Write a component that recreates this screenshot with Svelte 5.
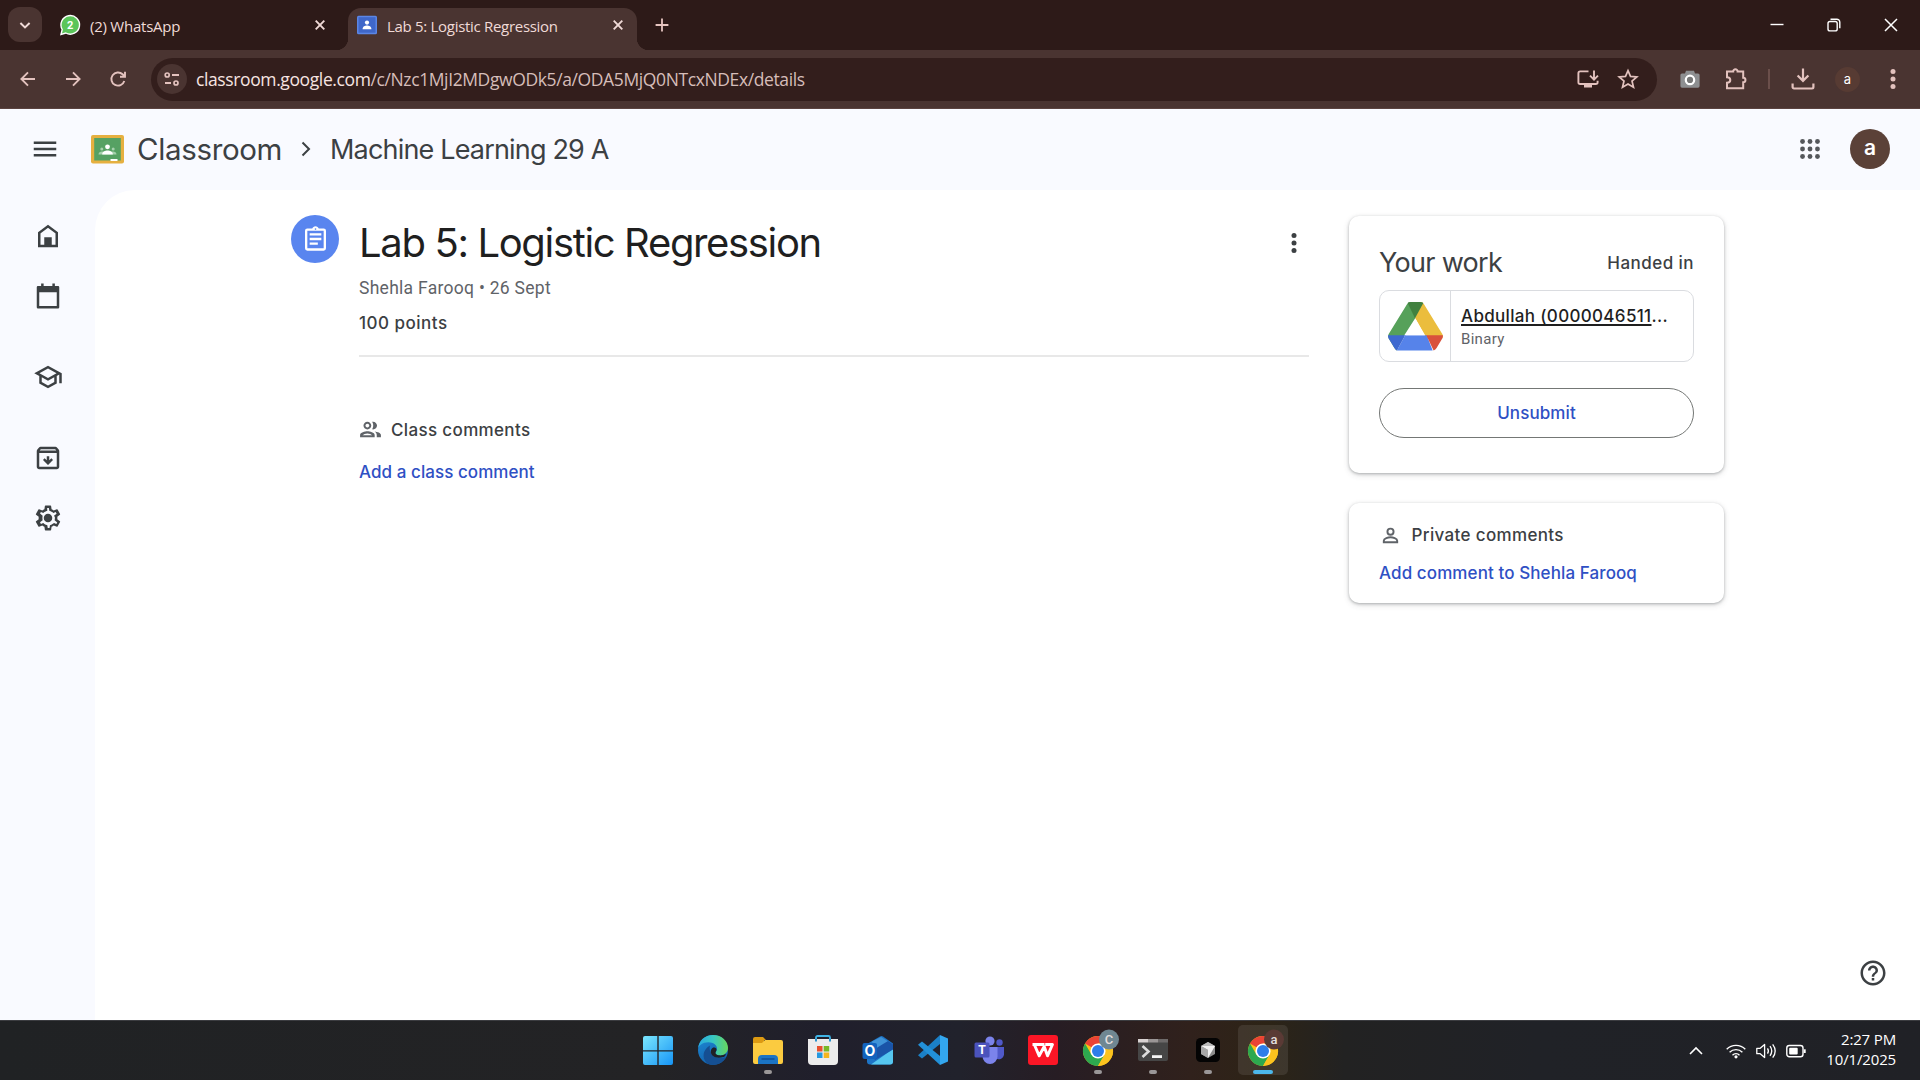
<script>
  const sideIcons = [
    { name: 'home', gap: 0 },
    { name: 'calendar', gap: 30 },
    { name: 'enrolled', gap: 51 },
    { name: 'archive', gap: 51 },
    { name: 'settings', gap: 30 }
  ];
  const apps = ['start', 'edge', 'files', 'store', 'outlook', 'code', 'teams', 'wps', 'chrome', 'terminal', 'cursor', 'chrome-active'];
  const running = ['files', 'chrome', 'terminal', 'cursor'];
  const dots = [4, 12, 20];
</script>

{#snippet kebab()}
  <svg class="i30" viewBox="0 0 24 24"><circle cx="12" cy="6" r="2" /><circle cx="12" cy="12" r="2" /><circle cx="12" cy="18" r="2" /></svg>
{/snippet}

{#snippet cross()}
  <svg class="i20 line" viewBox="0 0 20 20"><path d="M5.7 5.7l8.6 8.6M14.3 5.7l-8.6 8.6" stroke-width="1.9" /></svg>
{/snippet}

{#snippet chromeLogo(letter, tone)}
  <svg class="task" viewBox="0 0 40 40">
    <circle cx="20" cy="21" r="15" fill="#fbc116" />
    <path d="M20 21L7 13.5A15 15 0 0 1 33 13.5H20z" fill="#ea4335" />
    <path d="M7 13.5A15 15 0 0 0 20 36L26.5 24.8 20 21 13.5 24.8z" fill="#2da94f" />
    <path d="M20 13.5H33A15 15 0 0 1 20 36L26.5 24.8z" fill="#fcc31e" />
    <circle cx="20" cy="21" r="7.6" fill="#fff" />
    <circle cx="20" cy="21" r="6" fill="#2e7de9" />
    <circle cx="31" cy="9.5" r="10" fill={tone} />
    <text x="31" y="14" text-anchor="middle" class="badge">{letter}</text>
  </svg>
{/snippet}

<div class="screen">
  <header class="tabs">
    <div class="tab-search">
      <svg class="i20 line" viewBox="0 0 20 20"><path d="M5.4 8l4.6 4.4L14.6 8" stroke-width="2" /></svg>
    </div>
    <div class="tab idle">
      <svg class="i20" viewBox="0 0 20 20">
        <path d="M1 19.4l1.2-4.9A9.3 9.3 0 1 1 5.8 18z" fill="#5bc55a" stroke="#fff" stroke-width="1.4" />
        <text x="10.2" y="14" text-anchor="middle" class="wa">2</text>
      </svg>
      <span class="t-wa">(2) WhatsApp</span>
      {@render cross()}
    </div>
    <div class="tab active">
      <svg class="i20" viewBox="0 0 20 20">
        <rect width="20" height="18.5" y=".7" rx="1.5" fill="#5b86e5" /><rect x="1.5" y="2.2" width="17" height="15.5" fill="#3f67c9" />
        <circle cx="10" cy="7.6" r="2.1" fill="#fff" /><path d="M5.6 14.2c0-2.800 2.400-3.700 4.400-3.700s4.400.9 4.400 3.700z" fill="#fff" />
      </svg>
      <span class="t-lab">Lab 5: Logistic Regression</span>
      {@render cross()}
    </div>
    <svg class="plus line" viewBox="0 0 20 20"><path d="M10 3.6v12.8M3.600 10h12.800" stroke-width="1.8" /></svg>
    <div class="window">
      <svg class="i20 line" viewBox="0 0 20 20"><path d="M3.5 9.500h13" stroke-width="1.4" /></svg>
      <svg class="i20 line" viewBox="0 0 20 20"><rect x="4" y="6.5" width="9.2" height="9.4" rx="2" stroke-width="1.4" /><path d="M6.5 4.2h6.3a3 3 0 0 1 3 3v6" stroke-width="1.4" /></svg>
      <svg class="i20 line" viewBox="0 0 20 20"><path d="M4 4l12 12M16 4L4 16" stroke-width="1.5" /></svg>
    </div>
  </header>

  <div class="toolbar">
    <nav class="nav">
      <svg class="i20 line" viewBox="0 0 20 20"><path d="M17 10H3.6M10 3.4L3.4 10l6.6 6.6" stroke-width="1.9" /></svg>
      <svg class="i20 line" viewBox="0 0 20 20"><path d="M3 10h13.4M10 3.4l6.6 6.6-6.6 6.6" stroke-width="1.9" /></svg>
      <svg class="i20 line" viewBox="0 0 20 20"><path d="M16.3 12a6.6 6.6 0 1 1-1.7-6.7L17 7.6M17 2.8v5h-5" stroke-width="1.9" /></svg>
    </nav>
    <div class="omnibox">
      <div class="site">
        <svg class="i20 line" viewBox="0 0 20 20"><circle cx="5.2" cy="6" r="2" stroke-width="1.7" /><path d="M10 6h7M3 14h6" stroke-width="1.8" /><circle cx="14" cy="14" r="2" stroke-width="1.7" /></svg>
      </div>
      <p class="url"><b>classroom.google.com</b>/c/Nzc1MjI2MDgwODk5/a/ODA5MjQ0NTcxNDEx/details</p>
      <svg class="i24 line" viewBox="0 0 24 24"><path d="M12.5 4.4H4.2a1.8 1.8 0 0 0-1.8 1.8v9a1.8 1.8 0 0 0 1.8 1.8h15.6a1.8 1.8 0 0 0 1.8-1.8v-1.4M18 3.5v8.6M14 8.6l4 4 4-4" stroke-width="1.9" /><path d="M8 17h8v3.500H8z" class="solid" /></svg>
      <svg class="i24 line" viewBox="0 0 24 24"><path d="M12 3.6l2.5 5.8 6.3.5-4.8 4.1 1.5 6.2-5.5-3.3-5.5 3.3L8 14 3.2 9.9l6.3-.5z" stroke-width="1.7" /></svg>
    </div>
    <div class="ext">
      <svg class="i24" viewBox="0 0 24 24"><path d="M4 6.5h3l1-2.8h8l1 2.8h3a1.6 1.6 0 0 1 1.6 1.6v11a1.6 1.6 0 0 1-1.6 1.6H4a1.6 1.6 0 0 1-1.6-1.6v-11A1.6 1.6 0 0 1 4 6.5z" fill="#8e8f91" /><circle cx="12" cy="12.900" r="4.200" fill="#777" stroke="#fff" stroke-width="2.200" /></svg>
      <svg class="i24 line" viewBox="0 0 24 24"><path d="M3 4.6h6.200c-.2-3 4.600-3 4.400 0h5.600v6.200c3 0 3 4.400 0 4.400v6H3v-5.400c4.400 0 4.400-5.600 0-5.600z" stroke-width="2" /></svg>
      <i class="bar"></i>
      <svg class="i24 line dl" viewBox="0 0 24 24"><path d="M12 1.500v12M6.600 8.500l5.400 5.400 5.400-5.400M1.600 16.500v3.600A1.400 1.400 0 0 0 3 21.500h18a1.400 1.400 0 0 0 1.400-1.400v-3.600" stroke-width="2.200" /></svg>
      <span class="mini">a</span>
      {@render kebab()}
    </div>
  </div>

  <div class="app">
    <header class="bar-top">
      <svg class="i30 burger" viewBox="0 0 24 24"><path d="M3 18h18v-2H3zM3 13h18v-2H3zM3 6v2h18V6z" /></svg>
      <svg class="logo" viewBox="0 0 33 29">
        <rect width="33" height="28.500" rx="2" fill="#e6b040" /><rect x="3.200" y="3" width="26.600" height="22.500" fill="#56a163" />
        <circle cx="10.800" cy="14" r="1.500" fill="#a5d0ac" /><circle cx="22.200" cy="14" r="1.500" fill="#a5d0ac" />
        <path d="M7.500 19.500c0-2 1.600-3 3.300-3h11.400c1.700 0 3.300 1 3.300 3z" fill="#a5d0ac" />
        <circle cx="16.500" cy="11.800" r="2.400" fill="#fff" /><path d="M11.200 19.500c0-3 2.800-4 5.300-4s5.300 1 5.300 4z" fill="#fff" />
        <path d="M19.500 24h7v2h-7z" fill="#fff" />
      </svg>
      <span class="brand">Classroom</span>
      <svg class="crumb line" viewBox="0 0 20 20"><path d="M6.500 3.500L13 10l-6.500 6.500" stroke-width="2" /></svg>
      <span class="course">Machine Learning 29 A</span>
      <svg class="grid" viewBox="0 0 24 24">
        {#each dots as y}{#each dots as x}<circle cx={x - (12 - x) * 0.12} cy={y - (12 - y) * 0.12} r="2.900" />{/each}{/each}
      </svg>
      <span class="avatar">a</span>
    </header>

    <div class="body">
      <aside>
        {#each sideIcons as item}
          <svg class="i30" viewBox="0 0 24 24" style:margin-top="{item.gap}px">
            {#if item.name === 'home'}
              <path class="o" d="M5 20V9.500l7-5.300 7 5.300V20z" /><path d="M9 13h6v7H9z" />
            {:else if item.name === 'calendar'}
              <path class="o" d="M4 5h16v16H4z" stroke-linejoin="round" /><path d="M3.500 4.500h17V9h-17zM6.500 2h2v3h-2zM15.500 2h2v3h-2z" />
            {:else if item.name === 'enrolled'}
              <path d="M12 3L1 9l4 2.180v6L12 21l7-3.820v-6l2-1.090V17h2V9L12 3zm6.820 6L12 12.720 5.180 9 12 5.280 18.820 9zM17 15.990l-5 2.730-5-2.730v-3.720L12 15l5-2.730v3.720z" />
            {:else if item.name === 'archive'}
              <path d="M20.540 5.230l-1.390-1.680C18.880 3.210 18.470 3 18 3H6c-.47 0-.88.21-1.160.55L3.460 5.230C3.170 5.570 3 6.020 3 6.500V19c0 1.100.9 2 2 2h14c1.100 0 2-.9 2-2V6.500c0-.48-.17-.93-.46-1.270zM6.240 5h11.520l.83 1H5.420l.82-1zM5 19V8h14v11H5zm8-8.500h-2v3.200l-1.700-1.600L8 13.500l4 4 4-4-1.300-1.400-1.700 1.600z" />
            {:else}
              <path d="M19.430 12.980c.04-.32.07-.64.07-.98 0-.34-.03-.66-.07-.98l2.110-1.650c.19-.15.24-.42.12-.64l-2-3.460a.5.5 0 0 0-.61-.22l-2.490 1c-.52-.4-1.080-.73-1.690-.98l-.38-2.650A.49.490 0 0 0 14 2h-4c-.25 0-.46.18-.49.42l-.38 2.650c-.61.25-1.170.59-1.690.98l-2.490-1a.5.5 0 0 0-.61.220l-2 3.460c-.13.220-.07.490.12.640l2.110 1.650c-.04.320-.07.650-.07.980s.03.660.07.980l-2.110 1.650c-.19.150-.24.420-.12.640l2 3.460c.12.220.39.300.61.220l2.490-1c.52.400 1.080.730 1.690.980l.38 2.650c.03.240.24.420.49.420h4c.25 0 .46-.18.49-.42l.38-2.650c.61-.25 1.170-.59 1.690-.98l2.490 1c.23.090.49 0 .61-.22l2-3.460c.12-.22.07-.49-.12-.64zm-1.980-1.710c.08.620.08.840 0 1.460l-.14 1.130 1.590 1.260.480.380-.7 1.210-1.840-.74-.96.720c-.43.320-.84.560-1.250.730l-1.060.430-.36 2.150h-1.400l-.36-2.150-1.060-.43c-.43-.18-.83-.41-1.230-.71l-.97-.74-1.850.74-.7-1.210 2.080-1.640-.14-1.130a6 6 0 0 1 0-1.460l.14-1.130-2.080-1.640.7-1.210 1.850.74.97-.74c.40-.30.80-.53 1.230-.71l1.060-.43L11.300 4h1.400l.36 2.150 1.060.430c.43.180.83.410 1.230.710l.97.740 1.850-.74.700 1.210-2.080 1.640z" /><circle cx="12" cy="12" r="3.400" />
            {/if}
          </svg>
        {/each}
      </aside>

      <main>
        <span class="type">
          <svg class="i30" viewBox="0 0 24 24"><path d="M7 15h7v2H7zm0-4h10v2H7zm0-4h10v2H7zm12-4h-4.180C14.400 1.840 13.300 1 12 1s-2.400.84-2.820 2H5a2 2 0 0 0-2 2v15a2 2 0 0 0 2 2h14a2 2 0 0 0 2-2V5a2 2 0 0 0-2-2zm-7-.250c.41 0 .75.340.75.750s-.34.750-.75.750-.75-.34-.75-.75.340-.75.750-.75zM19 20H5V5h14z" /></svg>
        </span>
        <article>
          <div class="head"><h1>Lab 5: Logistic Regression</h1>{@render kebab()}</div>
          <p class="meta">Shehla Farooq • 26 Sept</p>
          <p class="points">100 points</p>
          <section>
            <h2 class="cc">
              <svg class="people" viewBox="0 0 24 24"><path d="M9 13.750c-2.340 0-7 1.170-7 3.500V19.500h14v-2.250c0-2.330-4.660-3.500-7-3.500zM4.340 17.500c.84-.9 2.870-1.750 4.660-1.750s3.820.850 4.660 1.750H4.340zM9 12c2.070 0 3.750-1.680 3.750-3.750S11.070 4.500 9 4.500 5.250 6.180 5.250 8.250 6.930 12 9 12zm0-5.600c1.020 0 1.850.830 1.850 1.850S10.020 10.100 9 10.100s-1.850-.83-1.850-1.850S7.980 6.400 9 6.400zm7.040 7.410c1.160.840 1.960 1.960 1.960 3.440v2.250h4v-2.250c0-2.020-3.500-3.170-5.960-3.440zM14.500 12c2.070 0 3.750-1.680 3.750-3.750S16.570 4.500 14.500 4.500c-.4 0-.7.050-1 .15.700.95 1.100 2.300 1.100 3.600s-.4 2.650-1.100 3.600c.3.100.6.150 1 .15z" /></svg>
              <span>Class comments</span>
            </h2>
            <a class="add-class">Add a class comment</a>
          </section>
        </article>
        <div class="cards">
          <div class="card work">
            <div class="work-head"><h2>Your work</h2><span>Handed in</span></div>
            <div class="file">
              <div class="thumb">
                <svg viewBox="0 0 56 50">
                  <path d="M19.500 2Q20.500 0 23 0l5 16L12 41 9 49.500Q7.500 49 6.500 47L.5 37Q-.5 35 .5 33z" fill="#56a15a" />
                  <path d="M33 0q2.500 0 3.500 2l19 31q1 2 0 4H39L27.500 16z" fill="#ebbd3d" />
                  <path d="M20 1Q21 0 23 0h10q2 0 3 1l-8.500 15.500z" fill="#41813f" />
                  <path d="M17.500 34h22l6 15.500H9z" fill="#5683ea" />
                  <path d="M0 34h17.500L9 49.500Q7.500 49 6.500 47L.5 37Q-.2 35.500 0 34z" fill="#3e69d0" />
                  <path d="M39 34h17q0 2-.7 3.200L49.500 47q-1 2-3 2.500z" fill="#d9513c" />
                  <path d="M28 17l9.800 17H18z" fill="#fff" />
                </svg>
              </div>
              <div class="info"><p class="fname"><u>Abdullah (0000046511</u>...</p><p class="kind">Binary</p></div>
            </div>
            <button>Unsubmit</button>
          </div>
          <div class="card private">
            <h2>
              <svg class="person" viewBox="0 0 24 24"><circle class="o" cx="12" cy="8" r="3.200" /><path class="o" d="M5 19v-1.600c0-2.400 4.700-3.600 7-3.600s7 1.200 7 3.600V19z" /></svg>
              <span>Private comments</span>
            </h2>
            <a>Add comment to Shehla Farooq</a>
          </div>
        </div>
        <svg class="help" viewBox="0 0 24 24"><path d="M11 18h2v-2h-2v2zm1-16C6.480 2 2 6.480 2 12s4.480 10 10 10 10-4.480 10-10S17.520 2 12 2zm0 18c-4.410 0-8-3.590-8-8s3.590-8 8-8 8 3.590 8 8-3.590 8-8 8zm0-14c-2.210 0-4 1.790-4 4h2c0-1.100.9-2 2-2s2 .9 2 2c0 2-3 1.750-3 5h2c0-2.250 3-2.500 3-5 0-2.210-1.790-4-4-4z" /></svg>
      </main>
    </div>
  </div>

  <footer>
    <div class="dock">
      {#each apps as app}
        <div class="slot" class:lit={app === 'chrome-active'} class:run={running.includes(app)}>
          {#if app === 'chrome'}
            {@render chromeLogo('C', '#6f8792')}
          {:else if app === 'chrome-active'}
            {@render chromeLogo('a', '#5a3a35')}
          {:else}
            <svg class="task" viewBox="0 0 40 40">
              {#if app === 'start'}
                <defs><linearGradient id="win" x1="0" y1="0" x2="1" y2="1"><stop offset="0" stop-color="#7be7fe" /><stop offset="1" stop-color="#1694f5" /></linearGradient></defs>
                <path d="M7 6h12.300v14.200H5V8a2 2 0 0 1 2-2zM20.700 6H33a2 2 0 0 1 2 2v12.200H20.700zM5 21.600h14.300V35H7a2 2 0 0 1-2-2zM20.700 21.600H35V33a2 2 0 0 1-2 2H20.700z" fill="url(#win)" />
              {:else if app === 'edge'}
                <defs>
                  <linearGradient id="ea" x1="0" y1=".4" x2="1" y2=".4"><stop offset="0" stop-color="#2aa9e0" /><stop offset=".5" stop-color="#38c7c3" /><stop offset="1" stop-color="#67d75c" /></linearGradient>
                  <linearGradient id="eb" x1="0" y1="0" x2=".5" y2="1"><stop offset="0" stop-color="#1e8ad6" /><stop offset="1" stop-color="#1262ac" /></linearGradient>
                </defs>
                <circle cx="20" cy="20" r="15" fill="url(#eb)" />
                <path d="M5 19C5.500 10.500 12 5 20 5c9 0 15 6.300 15 12.800 0 4.700-3.600 7.700-7.800 7.700-3.400 0-5-1.300-4.700-2.800.4-1.400 1.500-1.900 1.500-4.300 0-3.300-3.800-6.200-8.500-6.200C9.500 12.200 5.300 15.700 5 19z" fill="url(#ea)" />
                <path d="M17 15.500c-2 7 4.500 15 16 11.700-2 3.700-6.500 7.800-13 7.800-6 0-9.800-5-9.400-10 .3-4.500 3.400-8 6.400-9.500z" fill="#154f92" />
                <path d="M22.500 22.500c-.5 2.600 5.800 4.400 10.500 1.200-.8 3.300-3 3.300-3 3.300-6 2-11-.5-12-4-.7-3 1-6 3.500-5.500s2.500 2.500 1 5z" fill="#202026" />
              {:else if app === 'files'}
                <path d="M5 9a2 2 0 0 1 2-2h8l3 3h-2v6H5z" fill="#dc9a12" />
                <path d="M5 13h9l3-3h16a2 2 0 0 1 2 2v20a2 2 0 0 1-2 2H7a2 2 0 0 1-2-2z" fill="#fbcb40" />
                <path d="M10 34v-5a4 4 0 0 1 4-4h12a4 4 0 0 1 4 4v5z" fill="#1b74c4" /><path d="M13.500 29h13" stroke="#0f4f96" stroke-width="1.500" />
              {:else if app === 'store'}
                <path d="M13 11V7.500A1.500 1.500 0 0 1 14.500 6h11A1.500 1.500 0 0 1 27 7.500V11" fill="none" stroke="#3fb4e6" stroke-width="1.800" />
                <path d="M5 9h30v22a4 4 0 0 1-4 4H9a4 4 0 0 1-4-4z" fill="#ececec" /><path d="M13 11.500V9M27 11.500V9" stroke="#1588c8" stroke-width="1.800" />
                <path d="M14 16h5.500v5.500H14z" fill="#e8502e" /><path d="M20.700 16h5.500v5.500h-5.500z" fill="#78b825" /><path d="M14 22.500h5.500V28H14z" fill="#2599e0" /><path d="M20.700 22.500h5.500V28h-5.500z" fill="#f5b51d" />
              {:else if app === 'outlook'}
                <path d="M9 14L22 6.500q1.500-.8 3 0l10 7v18a3 3 0 0 1-3 3H12a3 3 0 0 1-3-3z" fill="#1d74c6" />
                <path d="M14 11.500L23 7l8 5-14 9z" fill="#3f93d8" /><path d="M35 19v12.500a3 3 0 0 1-3 3H13z" fill="#56c6ef" /><path d="M12 22L30 11l5 3.500v5L17 30z" fill="#1a54a8" />
                <rect x="4.500" y="13" width="14.500" height="16" rx="2" fill="#1263be" /><text x="11.800" y="26" class="olet" text-anchor="middle">O</text>
              {:else if app === 'code'}
                <path d="M27 5l8 3.500v23L27 35z" fill="#33a7ef" /><path d="M27 5v9L9 28.500l-4-3.300z" fill="#1b80c7" /><path d="M27 35v-9L9 11.500l-4 3.300z" fill="#2290d8" />
              {:else if app === 'teams'}
                <circle cx="31.500" cy="12.500" r="3.200" fill="#5059c9" /><circle cx="22" cy="11" r="4.600" fill="#7b83eb" />
                <path d="M28 17h8v7.500a5.300 5.300 0 0 1-8 4z" fill="#5059c9" /><path d="M14.500 17h15v9.500a7.500 7.500 0 0 1-15 0z" fill="#7b83eb" />
                <rect x="6.500" y="12.500" width="15" height="15" rx="1.500" fill="#4b53bc" /><text x="14" y="24.400" text-anchor="middle" class="tlet">T</text>
              {:else if app === 'wps'}
                <rect x="5" y="5" width="30" height="30" rx="3" fill="#fb1626" />
                <path d="M9.500 14.500h12M11.500 15l4.700 10.800 5-9.300 3.300 9.300 5-11.300h-7.300" fill="none" stroke="#fff" stroke-width="2.900" stroke-linejoin="round" />
              {:else if app === 'terminal'}
                <path d="M5 9h30v20a2 2 0 0 1-2 2H7a2 2 0 0 1-2-2z" fill="#464646" /><path d="M5 9h10v3.500H5z" fill="#d8d2d2" /><path d="M15 9h10v3.500H15z" fill="#9a9696" /><path d="M25 9h10v3.500H25z" fill="#6d6a6a" />
                <path d="M9.500 16l6 5.500-6 5.500" fill="none" stroke="#dcdcdc" stroke-width="2.600" /><path d="M19 25.200h10v2.800H19z" fill="#f4f4f4" />
              {:else}
                <rect x="8" y="8" width="24" height="24" rx="4.500" fill="#040404" />
                <path d="M20 12l7 4v8l-7 4-7-4v-8z" fill="#8d8d8d" /><path d="M20 12l7 4H13z" fill="#bdbdbd" /><path d="M13 16h14l-7 12v-8z" fill="#f2f2f2" /><path d="M13 16l7 4v8l-7-4z" fill="#a8a8a8" />
              {/if}
            </svg>
          {/if}
        </div>
      {/each}
    </div>
    <div class="tray">
      <svg class="i20 line up" viewBox="0 0 20 20"><path d="M4 13l6-6 6 6" stroke-width="1.600" /></svg>
      <svg class="i20 line" viewBox="0 0 20 20"><path d="M.7 8.200a13.200 13.200 0 0 1 18.600 0M3.600 11.300a9 9 0 0 1 12.800 0M6.500 14.200a5 5 0 0 1 7 0" stroke-width="1.400" /><circle cx="10" cy="15.800" r="1.600" class="solid" /></svg>
      <svg class="i20 line" viewBox="0 0 20 20"><path d="M.8 7.300h3.400L8.600 3.500v13l-4.400-3.800H.8zM11.500 7.300q1.800 2.700 0 5.400M14 5.200q3.500 4.800 0 9.600M16.700 3.300q5 6.700 0 13.400" stroke-width="1.300" stroke-linejoin="round" /></svg>
      <svg class="i20 line" viewBox="0 0 20 20"><rect x=".8" y="4.500" width="16.200" height="11.300" rx="2.500" stroke-width="1.400" /><rect x="3.200" y="6.800" width="8.500" height="6.700" rx="1" class="solid" /><path d="M18.700 8.300v3.700" stroke-width="2" /></svg>
      <div class="clock"><span>2:27 PM</span><span class="date">10/1/2025</span></div>
    </div>
  </footer>
</div>

<style>
  :global(body) { margin: 0; }
  .screen { width: 1920px; height: 1080px; display: flex; flex-direction: column; overflow: hidden; background: #f9faff; font-family: Inter, Roboto, sans-serif; color: #3c4043; }
  svg { display: block; flex: none; fill: currentColor; overflow: visible; }
  .line { fill: none; stroke: currentColor; }
  .line .solid { fill: currentColor; stroke: none; }
  .o { fill: none; stroke: currentColor; stroke-width: 2; }
  .i20 { width: 20px; height: 20px; }
  .i24 { width: 24px; height: 24px; }
  .i30 { width: 30px; height: 30px; }
  h1, h2, p { margin: 0; font-weight: 400; white-space: nowrap; }

  .tabs { height: 50px; box-sizing: border-box; flex: none; background: #2d1a18; display: flex; align-items: flex-start; padding-left: 8px; color: #f0dad7; font-family: "Open Sans", sans-serif; font-size: 15px; }
  .tab-search { width: 34px; height: 35px; margin-top: 7px; border-radius: 12px; background: #4a3431; display: grid; place-items: center; }
  .tab { height: 34px; margin-top: 8px; display: flex; align-items: center; box-sizing: border-box; white-space: nowrap; }
  .tab span { flex: 1; line-height: 20px; margin-top: 1px; }
  .idle { width: 306px; padding: 0 18px 0 18px; gap: 10px; }
  .idle .t-wa { letter-spacing: -0.24px; }
  .active { position: relative; width: 289px; height: 42px; padding: 0 9px 8px 9px; gap: 10px; background: #4a3431; border-radius: 13px 13px 0 0; }
  .active::before, .active::after { content: ''; position: absolute; bottom: 0; width: 12px; height: 12px; }
  .active::before { left: -12px; background: radial-gradient(circle at 0 0, transparent 12px, #4a3431 12.5px); }
  .active::after { right: -12px; background: radial-gradient(circle at 100% 0, transparent 12px, #4a3431 12.5px); }
  .t-lab { letter-spacing: -0.3px; }
  .wa { font: 700 11px Roboto, sans-serif; fill: #fff; }
  .plus { width: 20px; height: 20px; margin: 15px 0 0 15px; color: #e6c5c0; }
  .window { margin-left: auto; display: flex; gap: 37px; padding: 15px 19px 0 0; color: #fff; }

  .toolbar { height: 59px; flex: none; box-sizing: border-box; background: #4a3431; border-bottom: 1px solid #5b4340; display: flex; align-items: center; padding: 0 12px 0 17.5px; color: #e3c2be; }
  .nav { display: flex; gap: 25px; }
  .omnibox { margin-left: 23.5px; width: 1506px; height: 43px; border-radius: 22px; background: #331e1c; display: flex; align-items: center; box-sizing: border-box; padding: 0 17.5px 0 6px; }
  .omnibox .i24 + .i24 { margin-left: 16px; }
  .site { width: 30px; height: 30px; border-radius: 50%; background: #4a3431; display: grid; place-items: center; }
  .url { flex: 1; margin-left: 9px; font: 17.5px/24px "Open Sans", sans-serif; letter-spacing: -0.387px; color: #d6bdb9; }
  .url b { font-weight: 400; color: #f7e4e1; }
  .ext { flex: 1; display: flex; align-items: center; padding-left: 21px; }
  .ext .i24 + .i24 { margin-left: 22px; }
  .bar { width: 2px; height: 20px; background: #6b4f4b; margin-left: 20px; }
  .dl { margin-left: 21px; }
  .mini { width: 25px; height: 25px; border-radius: 50%; background: #573b33; color: #fff; font: 13px/24px Inter, sans-serif; text-align: center; margin: 0 18px 0 20px; }

  .app { height: 911px; flex: none; display: flex; flex-direction: column; }
  .bar-top { height: 81px; flex: none; display: flex; align-items: center; padding: 0 30px 1px; box-sizing: border-box; }
  .logo { width: 33px; height: 29px; margin-left: 31px; }
  .brand { width: 143px; margin-left: 13px; font-size: 29.500px; letter-spacing: -0.35px; white-space: nowrap; }
  .crumb { width: 20px; height: 20px; margin-left: 16px; }
  .course { margin-left: 14px; font-size: 27px; letter-spacing: -0.82px; white-space: nowrap; }
  .grid { width: 20px; height: 20px; margin-left: auto; margin-right: 30px; color: #54575b; }
  .avatar { width: 40px; height: 40px; border-radius: 50%; background: #5b4138; color: #fff; text-align: center; font: 600 21px/37px Inter, sans-serif; }
  .body { flex: 1; display: flex; }
  aside { width: 95px; box-sizing: border-box; padding: 31px 0 0 32.5px; }

  main { position: relative; flex: 1; display: flex; align-items: flex-start; background: #fff; border-radius: 40px 0 0 0; padding-left: 196px; }
  .type { width: 48px; height: 48px; margin-top: 25px; border-radius: 50%; background: #5985ef; color: #fff; display: grid; place-items: center; }
  .type .i30 { width: 29px; height: 28px; }
  article { width: 950px; margin: 26px 40px 0 20px; }
  .head { display: flex; justify-content: space-between; height: 54px; align-items: center; border: 0; }
  h1 { font-size: 40px; line-height: 54px; letter-spacing: -1.35px; color: #1f1f1f; }
  .meta { font: 17.5px/24px Roboto, sans-serif; letter-spacing: .28px; color: #5f6368; margin-top: 6px; }
  .points { font-size: 17px; font-weight: 500; line-height: 24px; letter-spacing: .5px; margin-top: 11px; padding-bottom: 20px; border-bottom: 2px solid #e8e8e8; }
  section { padding-top: 60px; }
  .cc, .private h2 { display: flex; align-items: center; font-size: 17px; font-weight: 500; line-height: 24px; letter-spacing: .35px; }
  .cc svg, .private svg { color: #5f6368; }
  .people { width: 25px; height: 25px; margin-left: -1px; }
  .person { width: 23px; height: 23px; }
  .cc span { margin-left: 8px; }
  a { display: block; font-size: 17px; font-weight: 500; line-height: 24px; letter-spacing: .06px; color: #2f50c4; white-space: nowrap; }
  .add-class { margin-top: 18px; }
  .cards { display: flex; flex-direction: column; gap: 30px; margin-top: 26px; }
  .card { width: 375px; box-sizing: border-box; background: #fff; border-radius: 10px; box-shadow: 0 1px 3px rgba(60, 64, 67, .34), 0 2px 6px rgba(60, 64, 67, .16); }
  .work { height: 257px; padding: 29px 30px 0; }
  .work-head { display: flex; justify-content: space-between; align-items: center; height: 36px; }
  .work-head h2 { font-size: 27px; letter-spacing: -0.7px; margin-top: -2px; }
  .work-head span { font-size: 17px; font-weight: 500; letter-spacing: .45px; }
  .file { margin-top: 9px; height: 72px; box-sizing: border-box; border: 1px solid #dadce0; border-radius: 10px; display: flex; }
  .thumb { width: 70px; border-right: 1px solid #dadce0; display: grid; place-items: center; }
  .thumb svg { width: 55px; height: 49px; }
  .info { padding: 13px 0 0 10px; }
  .fname { font-size: 17px; font-weight: 500; line-height: 24px; letter-spacing: .33px; color: #1f1f1f; }
  .fname u { text-underline-offset: 2px; text-decoration-thickness: 1.5px; }
  .kind { font: 15px/22px Roboto, sans-serif; color: #5f6368; letter-spacing: .3px; }
  button { display: block; width: 315px; height: 50px; margin-top: 26px; border: 1px solid #747775; border-radius: 26px; background: #fff; color: #2f50c4; font: 500 17px Inter, sans-serif; letter-spacing: .1px; padding: 0; }
  .private { height: 100px; padding: 20px 30px 0; }
  .private h2 { line-height: 25px; }
  .private h2 span { margin-left: 9.5px; }
  .private a { margin-top: 13px; letter-spacing: .1px; }
  .help { position: absolute; width: 30px; height: 30px; right: 32.5px; bottom: 32px; }

  footer { position: relative; flex: none; height: 60px; box-sizing: border-box; border-top: 1px solid #3b3c40; display: flex; background: linear-gradient(90deg, #202224 0%, #232325 34%, #201f2c 43%, #21222c 50%, #271d24 55%, #30211c 62%, #2d2416 66%, #222222 70%, #202227 80%, #202126 100%); color: #fff; }
  .dock { display: flex; gap: 5px; padding: 4px 0 0 632.5px; }
  .slot { position: relative; width: 50px; height: 50px; border-radius: 5px; display: grid; place-items: center; }
  .task { width: 40px; height: 40px; }
  .lit { background: rgba(255, 255, 255, .09); }
  .slot.run::after, .slot.lit::after { content: ''; position: absolute; bottom: 1px; left: 21px; width: 8px; height: 4px; border-radius: 2px; background: #9a9798; }
  .slot.lit::after { left: 15px; width: 20px; background: #4cb8ea; }
  .badge { font: 500 13px Roboto, sans-serif; fill: #e3dedd; }
  .olet { font: 700 14px Inter, sans-serif; fill: #fff; }
  .tlet { font: 700 12px Inter, sans-serif; fill: #fff; }
  .tray { margin-left: auto; display: flex; align-items: center; gap: 10px; padding-right: 24px; }
  .up { margin-right: 10px; }
  .clock { width: 80px; margin-top: -4px; display: flex; flex-direction: column; text-align: right; font: 15px/20px "Open Sans", sans-serif; letter-spacing: -0.15px; }
</style>
